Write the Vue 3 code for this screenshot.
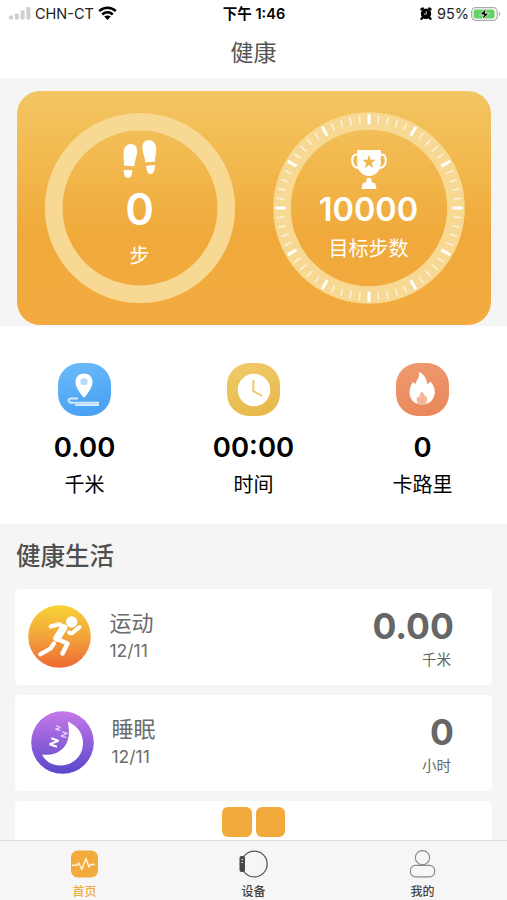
<script setup>
const ticks = Array.from({ length: 60 }, (_, i) => ({ angle: i * 6, major: i % 5 === 0 }))

const stats = [
  { icon: 'distance', value: '0.00', label: '千米' },
  { icon: 'time', value: '00:00', label: '时间' },
  { icon: 'calories', value: '0', label: '卡路里' },
]

const records = [
  { icon: 'run', name: '运动', date: '12/11', value: '0.00', unit: '千米' },
  { icon: 'sleep', name: '睡眠', date: '12/11', value: '0', unit: '小时' },
]
</script>

<template>
  <div class="screen">
    <header class="top">
      <div class="status">
        <div class="status-side">
          <svg class="signal" width="22" height="14" viewBox="0 0 22 14">
            <rect x="0" y="9.6" width="4" height="4" rx="1" />
            <rect x="5.8" y="7.4" width="4" height="6.2" rx="1" />
            <rect x="11.6" y="4.4" width="4" height="9.2" rx="1" />
            <rect x="17.4" y="1" width="4" height="12.6" rx="1" />
          </svg>
          <span class="carrier">CHN-CT</span>
          <svg class="wifi" width="19" height="14" viewBox="0 0 19 14">
            <path d="M1.2 5.2C6 .7 13 .7 17.8 5.2" />
            <path d="M4.2 8.5C7.4 5.6 11.6 5.6 14.8 8.5" />
            <path class="wifi-dot" d="M6.2 10.6C8.1 9 10.9 9 12.8 10.6L9.5 13.9Z" />
          </svg>
        </div>
        <div class="clock">下午 1:46</div>
        <div class="status-side right">
          <svg width="12" height="13" viewBox="0 0 12 13">
            <circle cx="6" cy="6.8" r="5.2" />
            <path d="M1.5 2.3L2.8 1.5M10.500 2.300L9.200 1.500M2.500 10.700L1.500 11.800M9.500 10.700L10.500 11.800" stroke="#000" stroke-width="2.400" stroke-linecap="round" />
            <path d="M6.300 4.200V7.100H4" fill="none" stroke="#ddd" stroke-width=".9" />
          </svg>
          <span class="percent">95%</span>
          <svg class="battery" width="30" height="14" viewBox="0 0 30 14">
            <rect x=".7" y=".7" width="25.6" height="12.6" rx="4" fill="#fff" stroke="#a9a9a9" stroke-width="1.2" />
            <rect x="2.6" y="2.500" width="21" height="9" rx="2.2" fill="#63d267" />
            <path d="M28 4.700C29.700 5.500 29.700 8.500 28 9.300Z" fill="#a9a9a9" />
            <path d="M15.500 1.200L8.600 7.800H12.600L11.200 12.800L18.200 6.200H14.200Z" fill="#000" stroke="#fff" stroke-width=".8" />
          </svg>
        </div>
      </div>
      <h1 class="title">健康</h1>
    </header>

    <section class="goal-wrap">
      <div class="goal">
        <div class="dial">
          <svg class="ring" width="192" height="192" viewBox="0 0 192 192">
            <circle cx="96" cy="96" r="86.3" />
          </svg>
          <div class="dial-body steps">
            <svg class="glyph" width="34" height="40" viewBox="0 0 34 40">
              <path d="M.9 25.500C1.400 21.500.2 18 .5 12.500C.8 7 4 4 8 4C12.500 4 14.700 7.600 14 13C13.400 18 11.500 21.500 11.300 26.500Z" />
              <path d="M.7 29.700L9.400 30.300C9.300 34.300 7.900 38.200 4.900 38C1.700 37.800.7 34 .7 29.700Z" />
              <path d="M32.100 21.500C31.700 17.500 33.500 14 33.200 8.500C32.900 3 29.700 0 25.700 0C21.200 0 19 3.600 19.500 9C20 14 22 17.500 22.300 22.500Z" />
              <path d="M32 25L23.100 25.700C23.300 30.300 24.800 34.200 27.800 34C30.800 33.800 31.900 30 32 25Z" />
            </svg>
            <div class="dial-value">0</div>
            <div class="dial-label">步</div>
          </div>
        </div>
        <div class="dial">
          <svg class="ring" width="192" height="192" viewBox="0 0 192 192">
            <circle cx="96" cy="96" r="87" />
            <line
              v-for="t in ticks"
              :key="t.angle"
              x1="96"
              x2="96"
              :y1="t.major ? 2.2 : 3.5"
              :y2="t.major ? 12.5 : 11.2"
              :class="t.major ? 'major' : 'minor'"
              :transform="`rotate(${t.angle} 96 96)`"
            />
          </svg>
          <div class="dial-body target">
            <svg class="glyph" width="36" height="40" viewBox="0 0 36 40">
              <path fill-rule="evenodd" d="M6.200 0H29.800V13C29.800 20.500 25 26 18 26C11 26 6.200 20.500 6.200 13ZM18 4.700L16.300 9.700H11.200L15.300 12.900L13.800 17.900L18 14.900L22.200 17.900L20.700 12.900L24.800 9.700H19.700Z" />
              <path class="handle" d="M7 4.500H5.500C2.800 4.500 1.200 7 1.200 10.500C1.200 15 4 18 8.500 18.300M29 4.500H30.500C33.200 4.500 34.800 7 34.800 10.500C34.800 15 32 18 27.500 18.300" />
              <path d="M15.900 28H20.100L20.800 32.500H22.500Q24 32.500 24.400 34L25.500 39H10.500L11.600 34Q12 32.500 13.500 32.500H15.200Z" />
            </svg>
            <div class="dial-value">10000</div>
            <div class="dial-label">目标步数</div>
          </div>
        </div>
      </div>
    </section>

    <section class="stats">
      <div v-for="s in stats" :key="s.icon" class="stat">
        <div class="badge" :class="s.icon">
          <svg v-if="s.icon === 'distance'" width="53" height="53" viewBox="0 0 53 53">
            <path d="M26 10.500C31.200 10.500 34.500 14 34.500 19C34.500 24.500 30 29.500 27.600 33.300Q26 35.500 24.400 33.300C22 29.500 17.500 24.500 17.500 19C17.500 14 20.800 10.500 26 10.500Z" fill="#fff" />
            <rect x="22.500" y="15.500" width="7" height="6.500" rx="2" fill="#b5dcfa" />
            <path d="M20 35.500H13.500C9.700 35.500 9.700 39.700 13.500 39.700H41M17 42H41" fill="none" stroke="#d3eafd" stroke-width="2" />
          </svg>
          <svg v-else-if="s.icon === 'time'" width="53" height="53" viewBox="0 0 53 53">
            <circle cx="27" cy="27" r="16.200" fill="#fff" />
            <path d="M26.300 17V28L35 33" fill="none" stroke="#ecc766" stroke-width="2" />
          </svg>
          <svg v-else width="53" height="53" viewBox="0 0 53 53">
            <path d="M22.700 9C27 10.500 31 14.500 31 21C32.500 20.500 33.500 19.500 34.200 18.500C37.500 21.500 39 25.500 38.800 29.500C38.500 36.500 33.500 41.500 26.200 41.500C18.500 41.500 13.500 36.500 13.500 29.500C13.500 25.500 14.700 22 17 18.700C17.800 20 18.600 20.800 19.300 21C20.500 16.500 24.300 14.500 22.700 9Z" fill="#fff" />
            <path d="M25.200 28.500C28 30 28.800 32 29 33.500L30.200 32.500C31.500 36 31.500 39 29.500 41Q26 42 22.500 41C20 38 20.500 35.500 21.500 33.500L23 34.500C23 32 24.500 31.500 25.200 28.500Z" fill="#f3b898" />
          </svg>
        </div>
        <div class="stat-value">{{ s.value }}</div>
        <div class="stat-label">{{ s.label }}</div>
      </div>
    </section>

    <section class="life">
      <h2 class="life-title">健康生活</h2>
      <div class="cards">
        <article v-for="r in records" :key="r.icon" class="card" :class="r.icon">
          <svg v-if="r.icon === 'run'" class="round" width="63" height="63" viewBox="0 0 63 63">
            <defs>
              <linearGradient id="runFill" x1="0" y1="0" x2="0" y2="1">
                <stop offset="0" stop-color="#f8d336" />
                <stop offset=".5" stop-color="#f2a43b" />
                <stop offset="1" stop-color="#ec6934" />
              </linearGradient>
            </defs>
            <circle cx="31.500" cy="31.500" r="31.300" fill="url(#runFill)" />
            <circle cx="43.700" cy="17" r="5.700" fill="#fff" />
            <g fill="none" stroke="#fff" stroke-linecap="round" stroke-linejoin="round">
              <path d="M22.700 21.500L31 19.200L37 22.500" stroke-width="4.200" />
              <path d="M35.500 23L29 33" stroke-width="7.500" />
              <path d="M29.500 34L39.500 38.500L34.500 48.500" stroke-width="4.500" />
              <path d="M26 38.500L22.500 43.500L12.200 49.300" stroke-width="4.300" />
              <path d="M41 27.500L44 28.300L51.500 22" stroke-width="3.900" />
            </g>
          </svg>
          <svg v-else class="round" width="63" height="63" viewBox="0 0 63 63">
            <defs>
              <linearGradient id="sleepFill" x1="0" y1="0" x2="0" y2="1">
                <stop offset="0" stop-color="#c679ea" />
                <stop offset="1" stop-color="#5947cb" />
              </linearGradient>
            </defs>
            <circle cx="31.500" cy="31.500" r="31.300" fill="url(#sleepFill)" />
            <path d="M36.700 10.500C46 14.500 52 22 52 32C52 45 42 54.500 29.500 54.500C21 54.500 14.500 50.500 11 43.500C27 45.500 42.500 36 36.700 10.500Z" fill="#fff" />
            <g fill="none" stroke="#fff" stroke-linejoin="bevel">
              <path d="M20.300 27.200L27.500 29.700L18.500 33.300L26 35.700" stroke-width="2" />
              <path d="M31 20.700L36.300 22.400L30 25L35.500 26.600" stroke-width="1.200" opacity=".75" />
              <path d="M25 15L29.700 16.500L24.300 18.200L29 19.400" stroke-width="1.100" opacity=".8" />
            </g>
          </svg>
          <div class="info">
            <div class="name">{{ r.name }}</div>
            <div class="date">{{ r.date }}</div>
          </div>
          <div class="result">
            <div class="amount">{{ r.value }}</div>
            <div class="unit">{{ r.unit }}</div>
          </div>
        </article>
        <article class="card partial">
          <span class="tile"></span>
          <span class="tile"></span>
        </article>
      </div>
    </section>

    <nav class="tabs">
      <div class="tab active">
        <svg width="27" height="27" viewBox="0 0 27 27">
          <rect width="27" height="27" rx="7" fill="#f1aa3b" />
          <path d="M1 14.700H5.800L7.800 12.500L10.800 19L15 8L18 16.500L19.800 14H24" fill="none" stroke="#fff3d9" stroke-width="1.500" stroke-linejoin="round" />
        </svg>
        <span>首页</span>
      </div>
      <div class="tab">
        <svg width="29" height="27" viewBox="0 0 29 27">
          <circle cx="15.300" cy="13.500" r="12.900" fill="none" stroke="#555" stroke-width="1.200" />
          <rect x=".5" y="5.500" width="5.500" height="16" rx="2" fill="#484848" />
          <path d="M2.500 9H4.200M2.500 12H4.200" stroke="#ddd" stroke-width="1.100" />
        </svg>
        <span>设备</span>
      </div>
      <div class="tab">
        <svg width="27" height="28" viewBox="0 0 27 28">
          <g fill="none" stroke="#888" stroke-width="1.100">
            <circle cx="13.500" cy="7.700" r="7.100" />
            <rect x="1.400" y="15.400" width="24.200" height="11.500" rx="5" />
          </g>
        </svg>
        <span>我的</span>
      </div>
    </nav>
  </div>
</template>

<style>
body {
  background: #fff;
}
</style>

<style scoped>
.screen {
  width: 507px;
  height: 900px;
  overflow: hidden;
  display: flex;
  flex-direction: column;
  background: #fff;
  color: #000;
  font-family: Inter, "Noto Sans CJK SC", sans-serif;
}
.top {
  height: 78px;
  flex: none;
}
.status {
  height: 27px;
  padding: 0 6px 0 9px;
  display: grid;
  grid-template-columns: 1fr auto 1fr;
  align-items: center;
}
.status-side {
  display: flex;
  align-items: center;
  font-size: 14.5px;
  color: #222;
}
.status-side.right {
  justify-content: flex-end;
}
.signal {
  fill: #cfcfcf;
  margin-right: 4px;
  margin-top: -1px;
}
.wifi {
  margin-left: 4px;
  fill: none;
  stroke: #000;
  stroke-width: 2.5;
  margin-top: -2px;
}
.wifi-dot {
  fill: #000;
  stroke: none;
}
.clock {
  font-size: 14.5px;
  font-weight: 600;
  line-height: 27px;
  padding-right: 2px;
}
.percent {
  margin: 0 2px 0 5px;
}
.title {
  margin: 0;
  font-size: 23px;
  font-weight: 400;
  line-height: 52px;
  height: 51px;
  text-align: center;
  color: #555;
}
.goal-wrap {
  flex: none;
  height: 248px;
  box-sizing: border-box;
  padding: 13px 16px 0 17px;
  background: #f5f5f5;
}
.goal {
  height: 234px;
  box-sizing: border-box;
  padding-top: 21px;
  border-radius: 23px;
  background: linear-gradient(#f3c563 0%, #f2bb52 25%, #f0a93a 62%, #f3ab40 100%);
  display: flex;
  justify-content: center;
  gap: 37px;
}
.dial {
  display: grid;
  width: 192px;
  height: 192px;
}
.dial > * {
  grid-area: 1 / 1;
}
.ring circle {
  fill: none;
  stroke: #f7d993;
  stroke-width: 17.6;
}
.major {
  stroke: #fff;
  stroke-width: 3;
}
.minor {
  stroke: #fffaf0;
  stroke-width: 1.5;
  opacity: 0.8;
}
.dial-body {
  display: flex;
  flex-direction: column;
  align-items: center;
  color: #fff;
}
.glyph {
  fill: #fff;
}
.handle {
  fill: none;
  stroke: #fff;
  stroke-width: 2;
}
.steps {
  padding-top: 28px;
}
.steps .dial-value {
  font-size: 43.5px;
  font-weight: 600;
  line-height: 40px;
  margin: 9px 0 14.5px;
}
.target {
  padding-top: 37.5px;
}
.target .dial-value {
  font-size: 32.5px;
  font-weight: 600;
  line-height: 30px;
  margin: 5px 0 12px;
}
.dial-label {
  font-size: 20px;
  line-height: 24px;
}
.stats {
  flex: none;
  height: 198px;
  box-sizing: border-box;
  padding: 36.5px 0 0;
  display: grid;
  grid-template-columns: repeat(3, 1fr);
}
.stat {
  display: flex;
  flex-direction: column;
  align-items: center;
}
.badge {
  width: 53px;
  height: 53px;
  border-radius: 22px;
}
.badge svg {
  display: block;
}
.distance {
  background: linear-gradient(165deg, #6cbcf9, #459df3);
}
.time {
  background: linear-gradient(165deg, #f0cb6b, #e6b748);
}
.calories {
  background: linear-gradient(165deg, #ef9b72, #e98558);
}
.stat-value {
  font-size: 27.5px;
  font-weight: 600;
  line-height: 32px;
  margin-top: 15.5px;
}
.stat-label {
  font-size: 20px;
  line-height: 24px;
  margin-top: 9.5px;
}
.life {
  flex: 1;
  min-height: 0;
  overflow: hidden;
  background: #f5f5f5;
  padding: 0 15px;
}
.life-title {
  margin: 0;
  height: 65px;
  line-height: 64px;
  font-size: 24.5px;
  font-weight: 500;
  color: #4f4f4f;
  padding-left: 1px;
}
.cards {
  display: flex;
  flex-direction: column;
  gap: 10.5px;
}
.card {
  height: 95.5px;
  box-sizing: border-box;
  background: #fff;
  border-radius: 5px;
  display: flex;
  align-items: center;
  padding: 0 38px 0 13px;
}
.card.sleep {
  padding-left: 15.5px;
}
.info {
  margin-left: 18.5px;
  flex: 1;
  color: #6c6c6c;
}
.sleep .info {
  margin-left: 18px;
}
.name {
  font-size: 22px;
  line-height: 28px;
}
.date {
  font-size: 17.5px;
  line-height: 28px;
}
.result {
  text-align: right;
  color: #666;
  padding-top: 9px;
}
.amount {
  font-size: 35.5px;
  font-weight: 700;
  line-height: 38px;
}
.unit {
  font-size: 14.5px;
  line-height: 28px;
  padding-right: 3px;
}
.card.partial {
  justify-content: center;
  align-items: flex-start;
  gap: 4px;
  padding: 6px 0 0;
}
.tile {
  width: 29.5px;
  height: 29.5px;
  border-radius: 6px;
  background: #f2aa3c;
}
.tabs {
  flex: none;
  height: 60.5px;
  box-sizing: border-box;
  border-top: 1px solid #dcdcdc;
  background: #f6f6f6;
  display: grid;
  grid-template-columns: repeat(3, 1fr);
}
.tab {
  display: flex;
  flex-direction: column;
  align-items: center;
  padding-top: 9px;
  font-size: 12px;
  font-weight: 500;
  color: #444;
}
.tab svg {
  height: 28px;
}
.tab span {
  line-height: 16px;
  margin-top: 6px;
}
.tab.active {
  color: #f1aa3b;
}
</style>
